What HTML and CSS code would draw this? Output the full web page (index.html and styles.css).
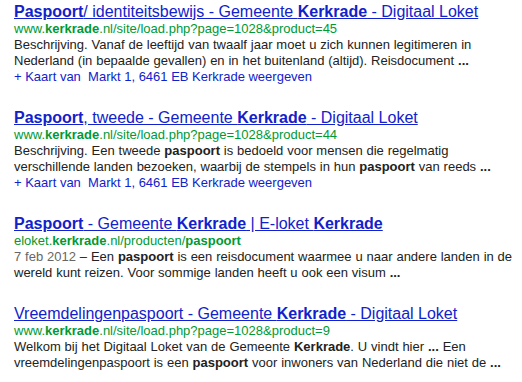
FILE: index.html
```html
<!DOCTYPE html>
<html lang="nl">
<head>
    <meta charset="UTF-8">
    <title>paspoort kerkrade - Google zoeken</title>
    <link rel="stylesheet" href="styles.css">
</head>
<body>
    <ol id="results">
        <li class="result">
            <h3 class="title"><a href="#"><b>Paspoort</b>/ identiteitsbewijs - Gemeente <b>Kerkrade</b> - Digitaal Loket</a></h3>
            <div class="snippet">
                <cite class="url">www.<b>kerkrade</b>.nl/site/load.php?page=1028&amp;product=45</cite>
                <span class="text">Beschrijving. Vanaf de leeftijd van twaalf jaar moet u zich kunnen legitimeren in<br>Nederland (in bepaalde gevallen) en in het buitenland (altijd). Reisdocument <b>...</b></span>
                <a class="map" href="#">+ Kaart van &nbsp;Markt 1, 6461 EB Kerkrade weergeven</a>
            </div>
        </li>
        <li class="result">
            <h3 class="title"><a href="#"><b>Paspoort</b>, tweede - Gemeente <b>Kerkrade</b> - Digitaal Loket</a></h3>
            <div class="snippet">
                <cite class="url">www.<b>kerkrade</b>.nl/site/load.php?page=1028&amp;product=44</cite>
                <span class="text">Beschrijving. Een tweede <b>paspoort</b> is bedoeld voor mensen die regelmatig<br>verschillende landen bezoeken, waarbij de stempels in hun <b>paspoort</b> van reeds <b>...</b></span>
                <a class="map" href="#">+ Kaart van &nbsp;Markt 1, 6461 EB Kerkrade weergeven</a>
            </div>
        </li>
        <li class="result">
            <h3 class="title"><a href="#"><b>Paspoort</b> - Gemeente <b>Kerkrade</b> | E-loket <b>Kerkrade</b></a></h3>
            <div class="snippet">
                <cite class="url">eloket.<b>kerkrade</b>.nl/producten/<b>paspoort</b></cite>
                <span class="text"><span class="date">7 feb 2012</span> – Een <b>paspoort</b> is een reisdocument waarmee u naar andere landen in de<br>wereld kunt reizen. Voor sommige landen heeft u ook een visum <b>...</b></span>
            </div>
        </li>
        <li class="result">
            <h3 class="title"><a href="#">Vreemdelingenpaspoort - Gemeente <b>Kerkrade</b> - Digitaal Loket</a></h3>
            <div class="snippet">
                <cite class="url">www.<b>kerkrade</b>.nl/site/load.php?page=1028&amp;product=9</cite>
                <span class="text">Welkom bij het Digitaal Loket van de Gemeente <b>Kerkrade</b>. U vindt hier <b>...</b> Een<br>vreemdelingenpaspoort is een <b>paspoort</b> voor inwoners van Nederland die niet de <b>...</b></span>
            </div>
        </li>
    </ol>
</body>
</html>
```

FILE: styles.css
```css
body {
    margin: 0;
    background: #fff;
    font-family: "Liberation Sans", Arial, sans-serif;
    color: #222;
}

#results {
    list-style: none;
    margin: 0;
    padding: 2px 0 0 14px;
}

.result {
    margin-bottom: 23px;
}

.title {
    margin: 0;
    font-size: 16px;
    font-weight: normal;
    line-height: 19px;
}

.title a {
    color: #12c;
    text-decoration: underline;
}

.snippet {
    font-size: 13px;
    line-height: 16px;
}

.url {
    display: block;
    font-style: normal;
    color: #093;
}

.text {
    display: block;
    word-spacing: 0.25px;
}

.date {
    color: #666;
}

.map {
    display: block;
    color: #12c;
    text-decoration: none;
}
```
